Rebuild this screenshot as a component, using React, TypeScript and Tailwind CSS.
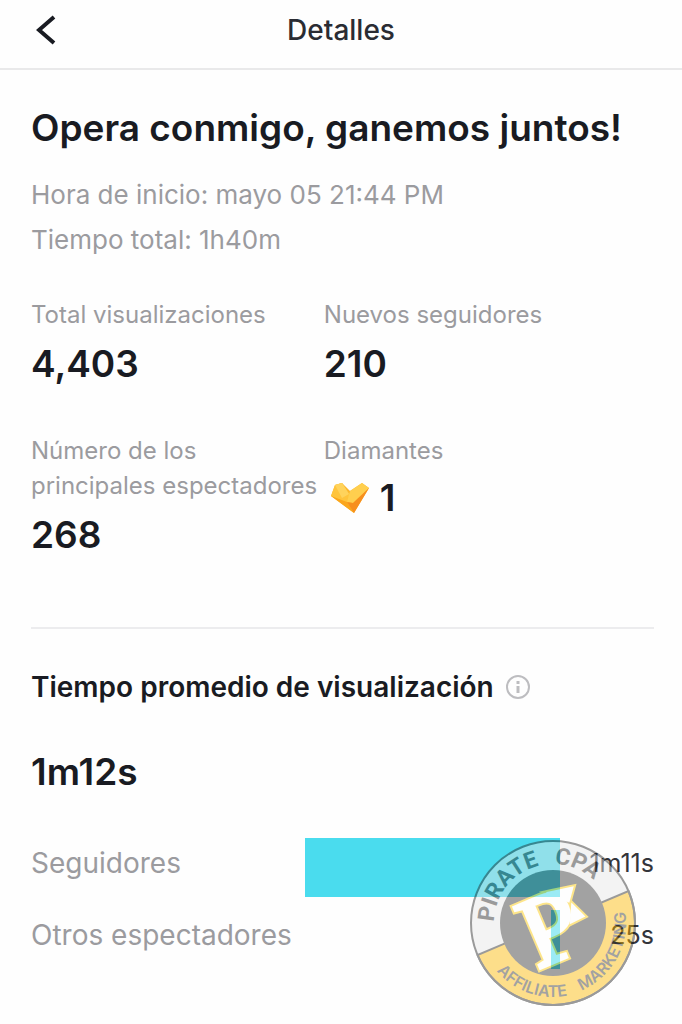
import { clsx } from 'clsx'

interface StatProps {
  label: string
  value: string
  gem?: boolean
}

interface ViewerRow {
  label: string
  value: string
  share: number
}

const stats: StatProps[] = [
  { label: 'Total visualizaciones', value: '4,403' },
  { label: 'Nuevos seguidores', value: '210' },
  { label: 'Número de los principales espectadores', value: '268' },
  { label: 'Diamantes', value: '1', gem: true },
]

const viewers: ViewerRow[] = [
  { label: 'Seguidores', value: '1m11s', share: 100 },
  { label: 'Otros espectadores', value: '25s', share: 3.6 },
]

function GemIcon() {
  return (
    <svg viewBox="0 0 40 32" className="h-8 w-10" aria-hidden="true">
      <path d="M5 3 12 1 20 9 32 1 39 6 24 31 1 14Z" fill="#fbb52c" />
      <path d="M5 3 12 1 20 13 17 21 1 14Z" fill="#ffc43c" />
      <path d="M20 9 32 1 39 6 23 21 17 20Z" fill="#ffcf4e" />
      <path d="M5 3 12 1 19 12 12 16Z" fill="#ffd35c" />
      <path d="M1 14 17 20 24 31Z" fill="#fba61c" />
      <path d="M17 20 23 21 39 6 24 31Z" fill="#f78f1e" />
    </svg>
  )
}

function Stat({ label, value, gem }: StatProps) {
  return (
    <div>
      <dt className="text-[24px] leading-[35px] text-[#9b9b9f]">{label}</dt>
      <dd
        className={clsx(
          'flex items-center text-[37px] leading-[44px] font-semibold text-[#191b22]',
          gem ? 'mt-2 gap-2.5 pl-1.5' : 'mt-2.5',
        )}
      >
        {gem && <GemIcon />}
        {value}
      </dd>
    </div>
  )
}

function Monogram({ className }: { className: string }) {
  return (
    <g className={className} strokeLinejoin="miter">
      <text
        x="-18"
        y="0"
        transform="translate(554 961) rotate(-23)"
        className="font-['Liberation_Serif'] text-[100px]"
      >
        P
      </text>
      <path d="M552 892 571 888 568 899Z" />
      <path d="M573 906 582 915 572 920Z" />
    </g>
  )
}

function PirateBadge() {
  return (
    <svg viewBox="0 0 166 166" className="h-[166px] w-[166px] opacity-45" role="img" aria-label="Pirate CPA Affiliate Marketing">
      <g transform="translate(-470 -839)">
        <circle cx="553" cy="922" r="82" fill="#e6e6e6" />
        <path d="M-82 0A82 82 0 0 0 82 0Z" transform="translate(553 922) rotate(-23)" fill="#fdb800" stroke="#222" strokeWidth="2" />
        <circle cx="553" cy="922" r="82" fill="none" stroke="#222" strokeWidth="2" />
        <circle cx="553" cy="922" r="53" fill="#333" />
        <path id="badge-top" d="M494 922A59 59 0 0 1 612 922" fill="none" />
        <path id="badge-bottom" d="M479 922A74 74 0 0 0 627 922" fill="none" />
        <path id="badge-right" d="M553 995A73 73 0 0 0 620 893" fill="none" />
        <g className="font-['Liberation_Sans_Narrow',Roboto] text-[23px] font-bold" fill="#222">
          <text><textPath href="#badge-top" startOffset="1">PIRATE</textPath></text>
          <text><textPath href="#badge-top" startOffset="94">CPA</textPath></text>
        </g>
        <g className="font-[Inter] text-[16px] font-semibold" fill="#333">
          <text><textPath href="#badge-bottom" startOffset="52">AFFILIATE</textPath></text>
          <text><textPath href="#badge-right" startOffset="29">MARKETING</textPath></text>
        </g>
        <Monogram className="fill-[#fdc800] stroke-[#fdc800] stroke-[8px]" />
        <Monogram className="fill-white stroke-white stroke-[4px]" />
      </g>
    </svg>
  )
}

function ViewerBar({ label, value, share }: ViewerRow) {
  return (
    <tr className="h-[72px] align-top">
      <th scope="row" className="w-[44%] text-left text-[28px] leading-[50px] font-normal text-[#9b9b9f]">{label}</th>
      <td>
        <div className="ml-auto h-[59px] bg-[#4adcee]" style={{ width: `${share}%` }} />
      </td>
      <td className="w-[94px] text-right text-[25px] leading-[50px] text-[#33343a]">{value}</td>
    </tr>
  )
}

export default function App() {
  return (
    <main className="min-h-screen bg-[#fefefe] pb-10 font-[Inter,sans-serif] text-[#191b22]">
      <header className="relative flex h-[70px] items-center justify-center border-b-2 border-[#e9e9ea] pb-2">
        <button type="button" aria-label="Volver" className="absolute left-8 p-1">
          <svg viewBox="0 0 20 30" className="h-[30px] w-5" fill="none" stroke="currentColor" strokeWidth="4">
            <path d="M18 2 3 15l15 13" />
          </svg>
        </button>
        <h1 className="text-[28px] leading-8 font-medium text-[#2a2c33]">Detalles</h1>
      </header>

      <div className="pr-7 pl-[31px]">
        <section className="border-b-2 border-[#ececee] pb-[70px]">
          <h2 className="pt-8 text-[37px] leading-[52px] font-semibold">Opera conmigo, ganemos juntos!</h2>
          <p className="mt-[18px] text-[26px] leading-[45px] text-[#9b9b9f]">
            Hora de inicio: mayo 05 21:44 PM
            <br />
            Tiempo total: 1h40m
          </p>
          <dl className="mt-[35px] grid grid-cols-[47fr_53fr] gap-y-[47px]">
            {stats.map((s) => (
              <Stat key={s.label} {...s} />
            ))}
          </dl>
        </section>

        <section>
          <h2 className="flex items-center gap-3 pt-[39px] text-[28px] leading-[38px] font-semibold">
            Tiempo promedio de visualización
            <svg viewBox="0 0 24 24" className="h-6 w-6" fill="none" stroke="#bdbdc0" strokeWidth="2" aria-hidden="true">
              <circle cx="12" cy="12" r="11" />
              <path d="M12 6v3M12 11v7" strokeWidth="3" />
            </svg>
          </h2>
          <p className="mt-10 text-[37px] leading-[52px] font-semibold">1m12s</p>
          <div className="relative mt-10">
            <table className="w-full">
              <tbody>
                {viewers.map((v) => (
                  <ViewerBar key={v.label} {...v} />
                ))}
              </tbody>
            </table>
            <div className="pointer-events-none absolute top-0.5 right-[18px]">
              <PirateBadge />
            </div>
          </div>
        </section>
      </div>
    </main>
  )
}
